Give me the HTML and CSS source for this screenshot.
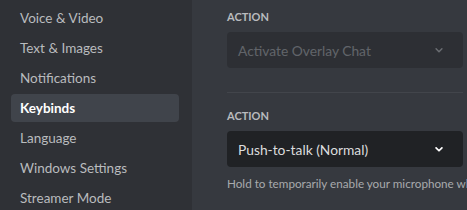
FILE: index.html
```html
<!DOCTYPE html>
<html lang="en">
  <head>
    <meta charset="UTF-8" />
    <title>Keybinds</title>
    <link rel="stylesheet" href="styles.css">
  </head>
  <body>
    <div class="layout">
      <nav class="sidebar">
        <div class="nav-item">Voice &amp; Video</div>
        <div class="nav-item">Text &amp; Images</div>
        <div class="nav-item">Notifications</div>
        <div class="nav-item selected">Keybinds</div>
        <div class="nav-item">Language</div>
        <div class="nav-item">Windows Settings</div>
        <div class="nav-item">Streamer Mode</div>
      </nav>
      <main class="content">
        <section class="keybind">
          <div class="label">Action</div>
          <div class="select disabled">
            <span>Activate Overlay Chat</span>
            <svg class="chevron" width="14" height="14" viewBox="0 0 24 24"><path d="M7 10l5 5 5-5" fill="none" stroke="currentColor" stroke-width="2.5" stroke-linecap="round" stroke-linejoin="round"/></svg>
          </div>
        </section>
        <section class="keybind">
          <div class="label">Action</div>
          <div class="select">
            <span>Push-to-talk (Normal)</span>
            <svg class="chevron" width="14" height="14" viewBox="0 0 24 24"><path d="M7 10l5 5 5-5" fill="none" stroke="currentColor" stroke-width="3" stroke-linecap="round" stroke-linejoin="round"/></svg>
          </div>
          <div class="description">Hold to temporarily enable your microphone while the key is held.</div>
        </section>
      </main>
    </div>
  </body>
</html>
```
FILE: styles.css
```css
body {
  margin: 0;
  font-family: Lato, "Noto Sans", sans-serif;
  background-color: #36393f;
  overflow: hidden;
}
.layout {
  display: flex;
  height: 210px;
}
.sidebar {
  width: 192px;
  flex-shrink: 0;
  background-color: #2f3136;
  padding: 4px 13px 0 11px;
  box-sizing: border-box;
}
.nav-item {
  height: 28px;
  line-height: 28px;
  margin-bottom: 2px;
  padding-left: 9px;
  border-radius: 4px;
  font-size: 13.5px;
  color: #b9bbbe;
  white-space: nowrap;
}
.nav-item.selected {
  background-color: #40444b;
  color: #fff;
  font-weight: 700;
}
.content {
  flex: 1;
  padding: 9px 0 0 35px;
  overflow: hidden;
}
.keybind {
  width: 236px;
  border-bottom: 1px solid #42454b;
  padding-bottom: 24px;
  margin-bottom: 15px;
}
.label {
  font-size: 11px;
  line-height: 16px;
  font-weight: 700;
  text-transform: uppercase;
  color: #b9bbbe;
  margin-bottom: 7px;
}
.select {
  height: 36px;
  display: flex;
  align-items: center;
  justify-content: space-between;
  padding: 0 17px 0 11px;
  background-color: #202225;
  border-radius: 4px;
  font-size: 13.8px;
  color: #dcddde;
  white-space: nowrap;
}
.select.disabled {
  opacity: 0.4;
  color: #a3a6aa;
}
.chevron {
  color: #fff;
}
.select.disabled .chevron {
  color: #b9bbbe;
}
.description {
  margin-top: 8px;
  font-size: 11.7px;
  line-height: 16px;
  color: #a8aaad;
  white-space: nowrap;
}
```
